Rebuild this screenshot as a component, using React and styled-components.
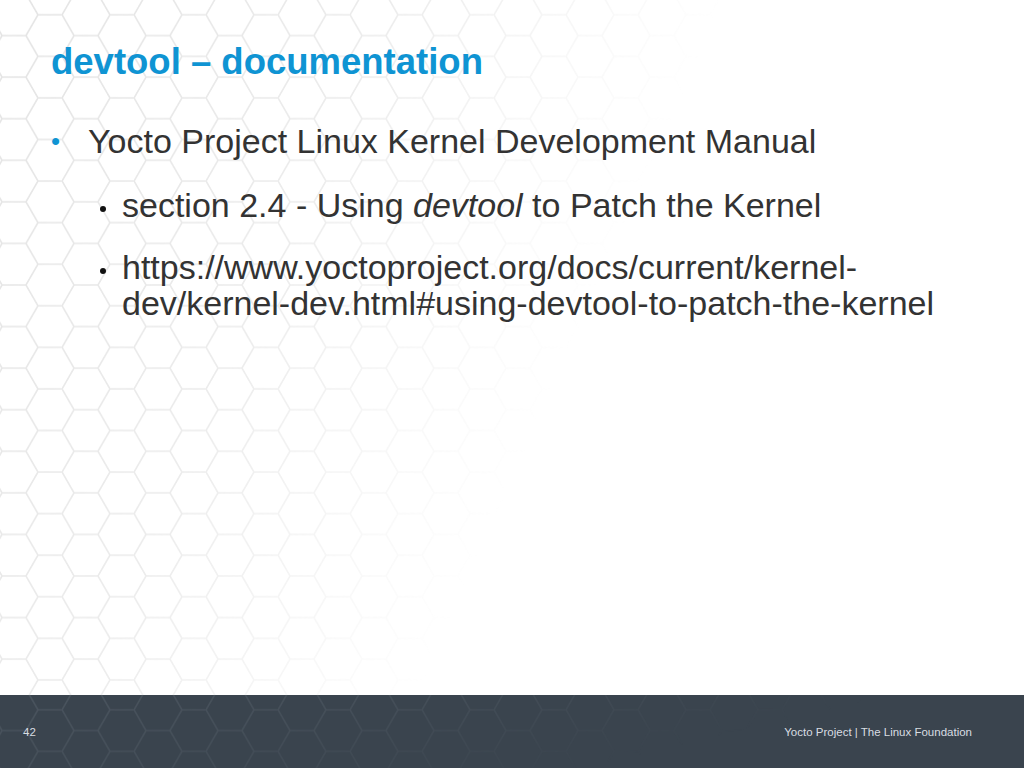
import styled, { createGlobalStyle } from "styled-components";

const Global = createGlobalStyle`
  html, body { margin: 0; padding: 0; }
  body { font-family: "Liberation Sans", Arial, sans-serif; }
`;

function HexPattern({ id, stroke, fadeTo }) {
  return (
    <HexSvg>
      <defs>
        <pattern id={id} width="72" height="41.57" patternUnits="userSpaceOnUse" x="-10" y="-6">
          <path
            d="M0 20.78 L12 0 L36 0 L48 20.78 L36 41.57 L12 41.57 Z M48 20.78 L72 20.78"
            fill="none" stroke={stroke} strokeWidth="1.6"
          />
        </pattern>
        <linearGradient id={id + "g"} x1="0" y1="0" x2="1" y2="0.3">
          <stop offset="0" stopColor="#fff" stopOpacity="1" />
          <stop offset="0.35" stopColor="#fff" stopOpacity="0.7" />
          <stop offset={fadeTo} stopColor="#fff" stopOpacity="0" />
        </linearGradient>
        <mask id={id + "m"}>
          <rect width="100%" height="100%" fill={`url(#${id}g)`} />
        </mask>
      </defs>
      <rect width="100%" height="100%" fill={`url(#${id})`} mask={`url(#${id}m)`} />
    </HexSvg>
  );
}

export default function App() {
  return (
    <Slide>
      <Global />
      <Body>
        <HexPattern id="hb" stroke="#e4e4e4" fadeTo="0.65" />
        <Content>
          <Title>devtool – documentation</Title>
          <Item>
            <Dot>•</Dot>
            <span>Yocto Project Linux Kernel Development Manual</span>
          </Item>
          <SubItem>
            <SubDot />
            <span>section 2.4 - Using <em>devtool</em> to Patch the Kernel</span>
          </SubItem>
          <SubItem>
            <SubDot />
            <span>https://www.yoctoproject.org/docs/current/kernel-<br />dev/kernel-dev.html#using-devtool-to-patch-the-kernel</span>
          </SubItem>
        </Content>
      </Body>
      <Footer>
        <HexPattern id="hf" stroke="#4a545e" fadeTo="0.8" />
        <FootText>42</FootText>
        <FootText>Yocto Project | The Linux Foundation</FootText>
      </Footer>
    </Slide>
  );
}

const Slide = styled.div`
  width: 1024px;
  height: 768px;
  display: flex;
  flex-direction: column;
  overflow: hidden;
`;

const HexSvg = styled.svg`
  position: absolute;
  inset: 0;
  width: 100%;
  height: 100%;
`;

const Body = styled.div`
  position: relative;
  height: 695px;
  background: #fff;
`;

const Content = styled.div`
  position: relative;
  padding: 40px 0 0 51px;
`;

const Title = styled.h1`
  margin: 0 0 37px;
  font-size: 36.5px;
  font-weight: bold;
  color: #0f94d3;
  line-height: 44px;
`;

const Item = styled.div`
  display: flex;
  font-size: 34px;
  color: #333;
  line-height: 40px;
  margin-bottom: 26px;
`;

const Dot = styled.span`
  color: #0f94d3;
  width: 37px;
  font-size: 26px;
`;

const SubItem = styled.div`
  display: flex;
  align-items: flex-start;
  font-size: 34px;
  color: #333;
  line-height: 36px;
  margin: 0 0 26px 49px;
  em { font-style: italic; }
`;

const SubDot = styled.span`
  flex: none;
  width: 6px;
  height: 6px;
  border-radius: 50%;
  background: #111;
  margin: 19px 16px 0 0;
`;

const Footer = styled.div`
  position: relative;
  flex: 1;
  background: #3a444e;
  display: flex;
  justify-content: space-between;
  align-items: center;
  padding: 0 52px 0 23px;
`;

const FootText = styled.span`
  position: relative;
  font-size: 11.5px;
  color: #d8dde2;
`;
